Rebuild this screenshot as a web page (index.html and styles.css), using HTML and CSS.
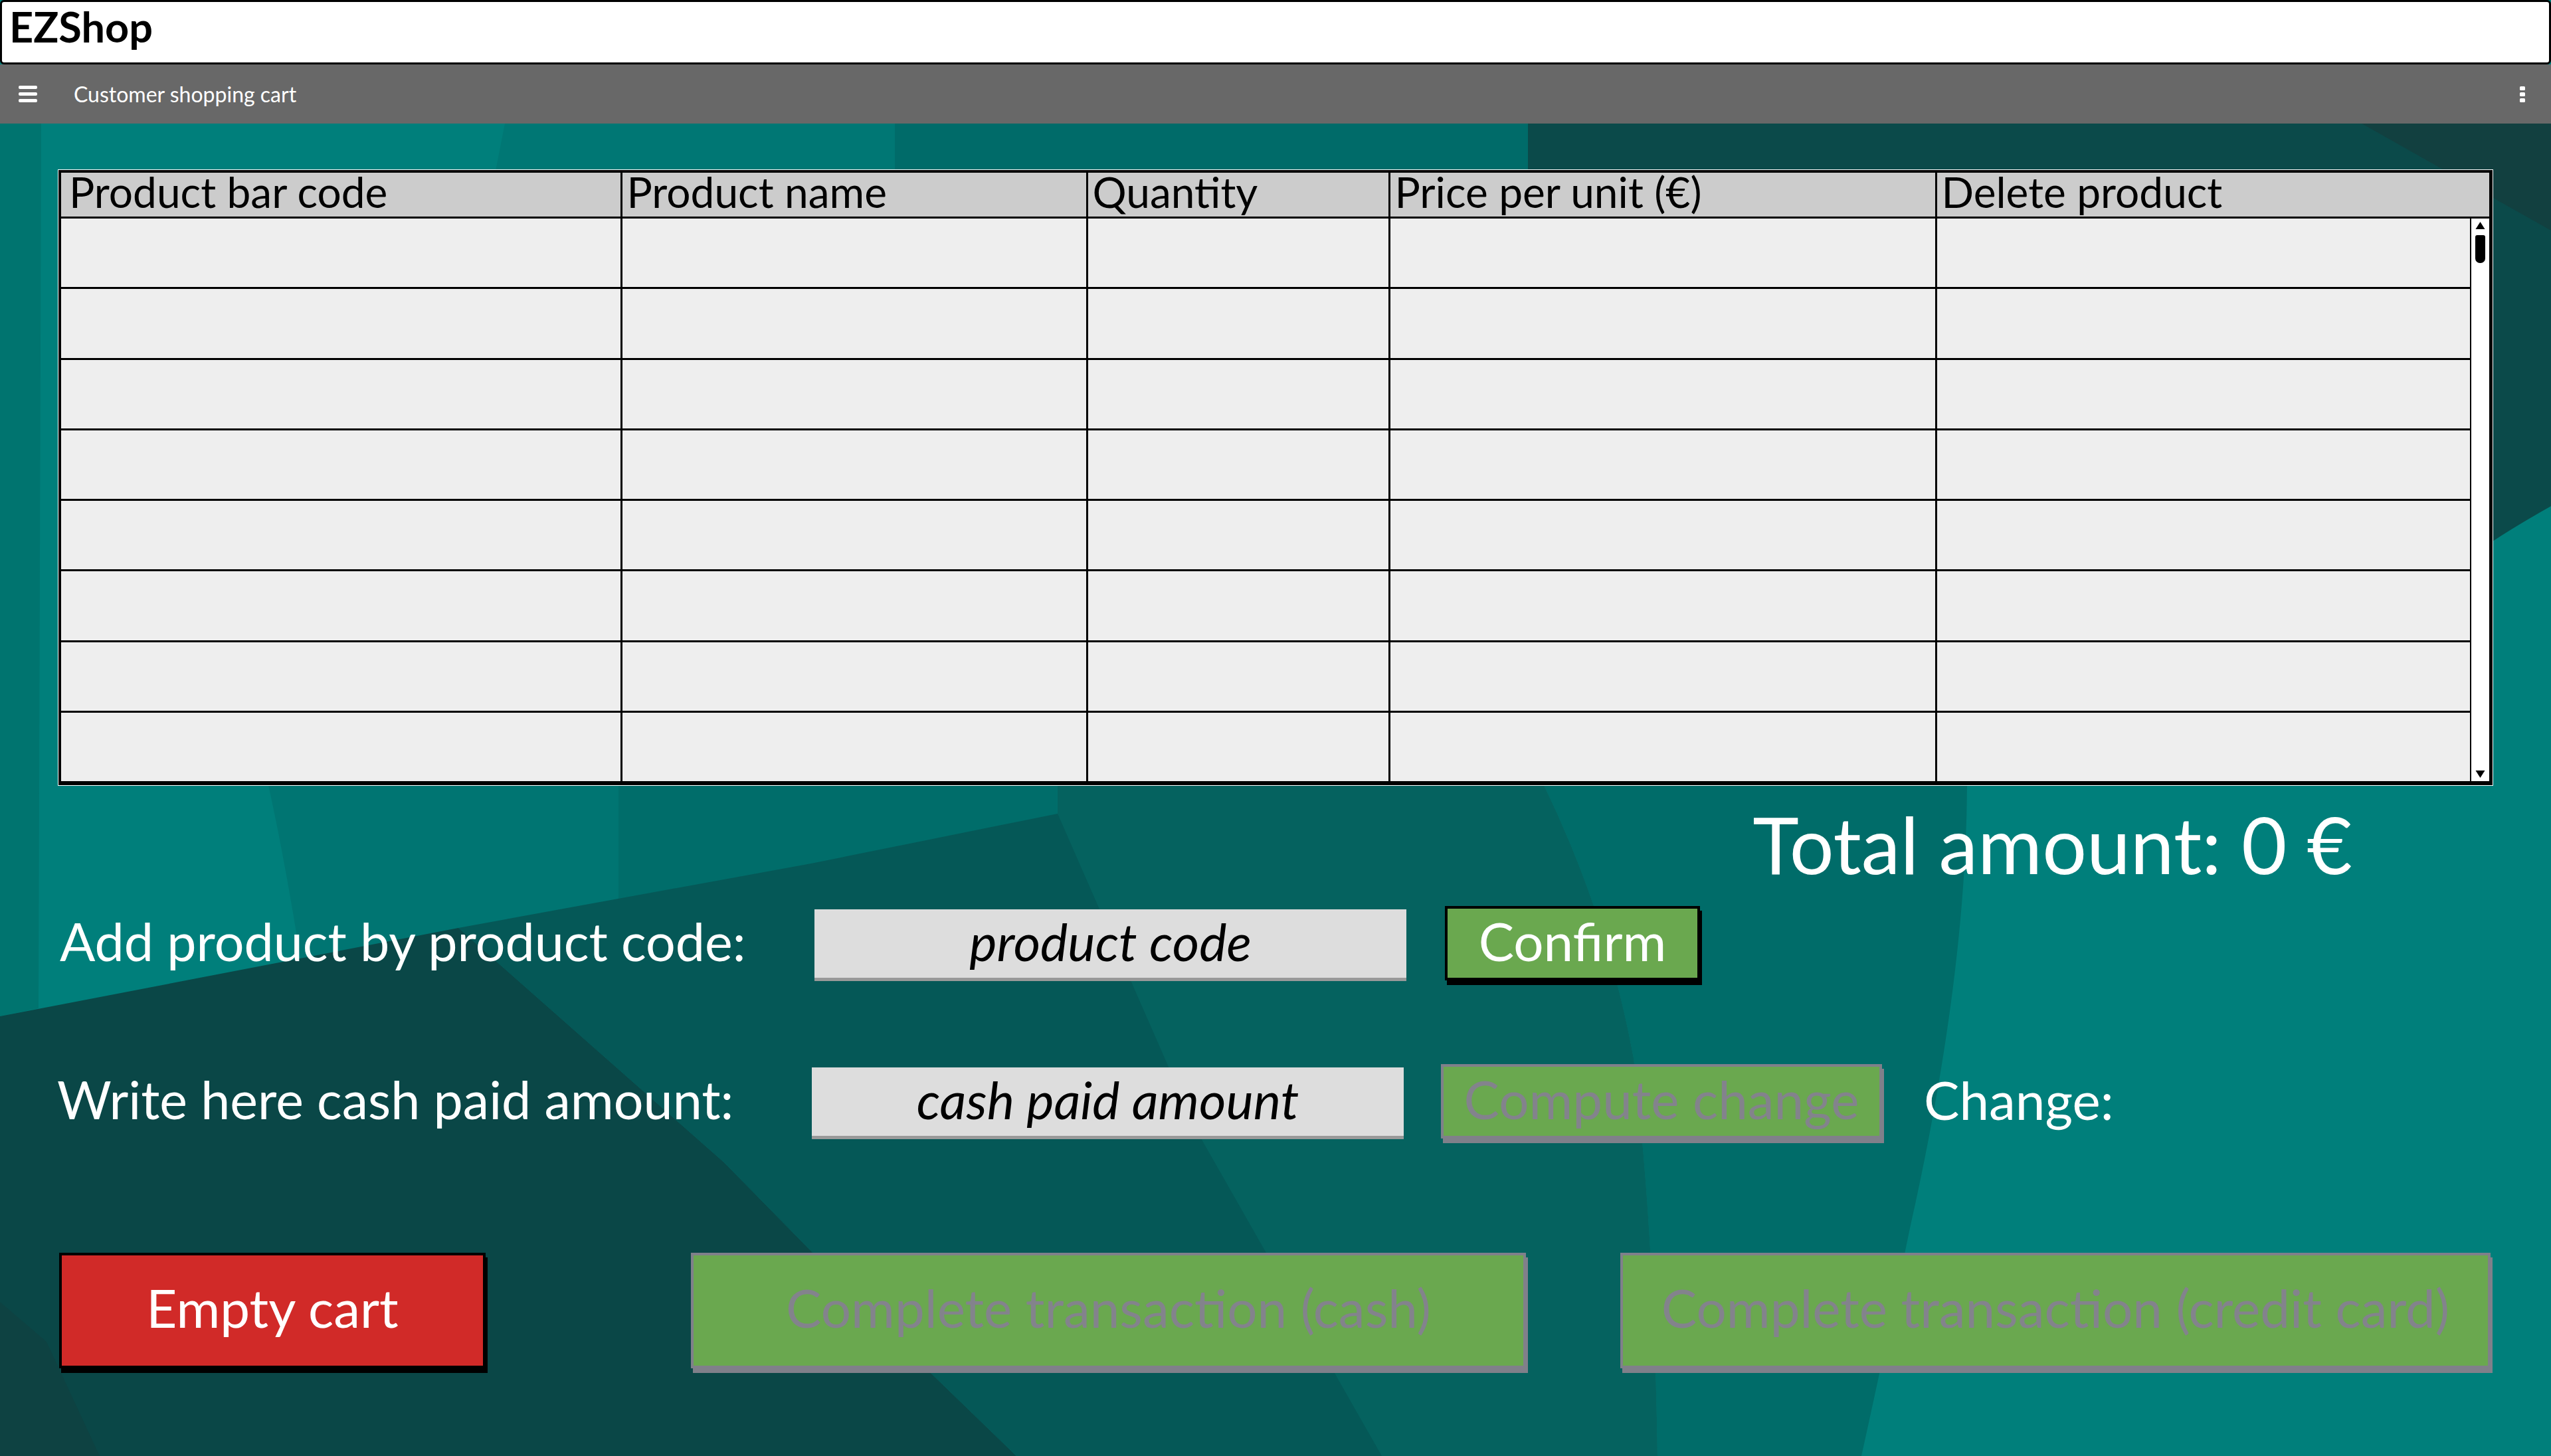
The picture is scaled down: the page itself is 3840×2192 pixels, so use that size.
FILE: index.html
```html
<!DOCTYPE html>
<html lang="en">
<head>
<meta charset="utf-8">
<title>EZShop - Customer shopping cart</title>
<link rel="stylesheet" href="styles.css">
</head>
<body>
<header class="titlebar"><span class="brand">EZShop</span></header>
<nav class="toolbar">
  <span class="hamburger"><i></i><i></i><i></i></span>
  <span class="toolbar-title">Customer shopping cart</span>
  <span class="kebab"><i></i><i></i><i></i></span>
</nav>
<main class="main">
  <svg class="bg" viewBox="0 0 3840 2006" preserveAspectRatio="none" aria-hidden="true">
    <g transform="translate(0,-186)">
      <rect x="0" y="186" width="3840" height="2006" fill="#007f7b"/>
      <polygon points="0,186 62,186 58,1518 0,1530" fill="#00746f"/>
      <polygon points="760,186 1347,186 1347,262 745,262" fill="#007774"/>
      <polygon points="1347,186 2300,186 2300,262 1347,262" fill="#006b69"/>
      <path d="M2300 186 L3840 186 L3840 762 Q3790 790 3752 815 L3752 262 L2300 262 Z" fill="#0b4a4a"/>
      <polygon points="3555,186 3840,186 3840,347" fill="#124040"/>
      <path d="M404 1182 Q430 1300 455 1460 L931 1370 L931 1182 Z" fill="#007572"/>
      <polygon points="931,1182 1592,1182 1592,1400 931,1400" fill="#006d6a"/>
      <path d="M2324 1182 L2961 1182 Q2960 1470 2875 1849 Q2840 2020 2802 2192 L2495 2192 Q2490 1850 2459 1593 Q2420 1380 2324 1182 Z" fill="#006c69"/>
      <path d="M1592 1182 L2324 1182 Q2420 1380 2459 1593 Q2490 1850 2495 2192 L1592 2192 Z" fill="#05625f"/>
      <polygon points="690,1397 1221,1300 1592,1225 1800,1700 2080,2192 1530,2192 1400,2066 1090,1750" fill="#055857"/>
      <polygon points="0,1530 690,1397 1090,1750 1400,2066 1530,2192 0,2192" fill="#0a4747"/>
      <polygon points="0,1960 70,2020 150,2192 0,2192" fill="#0e4242"/>
    </g>
  </svg>
  <div class="content">
    <div class="table">
      <div class="thead">
        <div class="th">Product bar code</div>
        <div class="th">Product name</div>
        <div class="th">Quantity</div>
        <div class="th">Price per unit (€)</div>
        <div class="th">Delete product</div>
      </div>
      <div class="tbody">
        <div class="rows">
          <div class="row"><div class="td"></div><div class="td"></div><div class="td"></div><div class="td"></div><div class="td"></div></div>
          <div class="row"><div class="td"></div><div class="td"></div><div class="td"></div><div class="td"></div><div class="td"></div></div>
          <div class="row"><div class="td"></div><div class="td"></div><div class="td"></div><div class="td"></div><div class="td"></div></div>
          <div class="row"><div class="td"></div><div class="td"></div><div class="td"></div><div class="td"></div><div class="td"></div></div>
          <div class="row"><div class="td"></div><div class="td"></div><div class="td"></div><div class="td"></div><div class="td"></div></div>
          <div class="row"><div class="td"></div><div class="td"></div><div class="td"></div><div class="td"></div><div class="td"></div></div>
          <div class="row"><div class="td"></div><div class="td"></div><div class="td"></div><div class="td"></div><div class="td"></div></div>
          <div class="row"><div class="td"></div><div class="td"></div><div class="td"></div><div class="td"></div><div class="td"></div></div>
        </div>
        <div class="scrollbar">
          <svg class="arrow" width="17" height="16" viewBox="0 0 17 16"><path d="M8.5 2 L15.5 13 L1.5 13 Z" fill="#000"/></svg>
          <div class="thumb"></div>
          <div class="track"></div>
          <svg class="arrow" width="17" height="16" viewBox="0 0 17 16"><path d="M1.5 3 L15.5 3 L8.5 14 Z" fill="#000"/></svg>
        </div>
      </div>
    </div>

    <div class="total">Total amount: 0 €</div>

    <div class="form-row row-add">
      <div class="label">Add product by product code:</div>
      <div class="input">product code</div>
      <div class="btn btn-confirm">Confirm</div>
    </div>

    <div class="form-row row-cash">
      <div class="label">Write here cash paid amount:</div>
      <div class="input">cash paid amount</div>
      <div class="btn btn-compute disabled">Compute change</div>
      <div class="label change">Change:</div>
    </div>

    <div class="actions">
      <div class="btn-big btn-empty">Empty cart</div>
      <div class="btn-big btn-cash disabled">Complete transaction (cash)</div>
      <div class="btn-big btn-card disabled">Complete transaction (credit card)</div>
    </div>
  </div>
</main>
</body>
</html>
```

FILE: styles.css
```css
* {
  box-sizing: border-box;
}

html, body {
  margin: 0;
  padding: 0;
}

body {
  width: 3840px;
  height: 2192px;
  overflow: hidden;
  background: #007f7b;
  font-family: "Lato", "Liberation Sans", sans-serif;
  color: #000;
}

/* ---------- title bar ---------- */
.titlebar {
  display: block;
  height: 97px;
  border: 3px solid #000;
  border-radius: 6px;
  background: #fff;
  padding-left: 11px;
}

.brand {
  display: block;
  font-weight: 700;
  font-size: 63px;
  line-height: 74px;
}

/* ---------- toolbar ---------- */
.toolbar {
  display: flex;
  align-items: center;
  height: 89px;
  background: #686868;
  padding: 0 39px 0 28px;
}

.hamburger {
  display: flex;
  flex-direction: column;
  gap: 5px;
  width: 28px;
}

.hamburger i {
  display: block;
  height: 5px;
  background: #fff;
  border-radius: 2px;
}

.toolbar-title {
  flex: 1;
  margin-left: 55px;
  color: #fff;
  font-size: 32px;
  line-height: 40px;
}

.kebab {
  display: flex;
  flex-direction: column;
  gap: 3px;
}

.kebab i {
  display: block;
  width: 8px;
  height: 6px;
  background: #fff;
  border-radius: 1.5px;
}

/* ---------- main area ---------- */
.main {
  position: relative;
  height: 2006px;
}

.bg {
  position: absolute;
  left: 0;
  top: 0;
  width: 3840px;
  height: 2006px;
}

.content {
  position: relative;
  padding: 70px 88px 0 88px;
}

/* ---------- table ---------- */
.table {
  width: 3664px;
  border: 4px solid #000;
  border-right-width: 5px;
  border-bottom-width: 6px;
  background: #eeeeee;
  box-shadow: 0 0 0 1px #fff;
}

.thead {
  display: grid;
  grid-template-columns: 844.5px 701px 455px 823px 1fr;
  height: 69px;
  background: #cccccc;
  border-bottom: 3px solid #000;
}

.th {
  font-size: 64px;
  line-height: 58px;
  height: 66px;
  padding-left: 7px;
  border-right: 3px solid #000;
  white-space: nowrap;
}

.th:first-child {
  padding-left: 12px;
}

.th:last-child {
  border-right: none;
}

.tbody {
  display: flex;
  height: 847px;
}

.rows {
  flex: 1;
  display: flex;
  flex-direction: column;
}

.row {
  display: grid;
  grid-template-columns: 844.5px 701px 455px 823px 1fr;
  height: 106.25px;
  border-bottom: 3px solid #000;
}

.row:last-child {
  height: 103.25px;
  border-bottom: none;
}

.td {
  border-right: 3px solid #000;
}

.td:last-child {
  border-right: none;
}

.scrollbar {
  width: 29px;
  border-left: 2px solid #000;
  background: #fff;
  display: flex;
  flex-direction: column;
  align-items: center;
  padding: 3px 0 3px;
}

.arrow {
  display: block;
}

.thumb {
  width: 15px;
  height: 42px;
  margin-top: 6px;
  background: #000;
  border-radius: 3px 3px 7px 7px;
}

.track {
  flex: 1;
}

/* ---------- total ---------- */
.total {
  margin-top: 29px;
  padding-right: 211px;
  text-align: right;
  color: #fff;
  font-size: 118px;
  line-height: 120px;
  white-space: nowrap;
}

/* ---------- form rows ---------- */
.form-row {
  display: flex;
  align-items: flex-start;
  height: 113px;
}

.row-add {
  margin-top: 33px;
  padding-left: 2px;
}

.row-cash {
  margin-top: 125px;
  margin-left: -2px;
}

.label {
  width: 1136px;
  margin-top: 5px;
  color: #fff;
  font-size: 79px;
  line-height: 96px;
  white-space: nowrap;
}

.input {
  width: 891px;
  height: 108px;
  margin-top: 5px;
  background: #dddddd;
  border-bottom: 5px solid #999;
  font-style: italic;
  font-size: 78px;
  line-height: 96px;
  text-align: center;
  white-space: nowrap;
}

.btn {
  height: 112px;
  border: 4px solid #000;
  box-shadow: 3px 7px 0 #000;
  background: #6aa84f;
  color: #fff;
  font-size: 80px;
  line-height: 96px;
  text-align: center;
  white-space: nowrap;
}

.btn-confirm {
  width: 384px;
  margin-left: 58px;
}

.btn-compute {
  width: 664px;
  margin-left: 56px;
}

.disabled {
  border-color: #80808a;
  box-shadow: 3px 7px 0 #80808a;
  color: #83838c;
}

.change {
  width: auto;
  margin-left: 63px;
  font-size: 80px;
}

/* ---------- bottom actions ---------- */
.actions {
  display: flex;
  height: 174px;
  margin-top: 171px;
  padding-left: 1px;
}

.btn-big {
  display: flex;
  align-items: center;
  justify-content: center;
  height: 174px;
  padding-bottom: 10px;
  border: 4px solid #000;
  box-shadow: 3px 7px 0 #000;
  background: #6aa84f;
  color: #fff;
  font-size: 80px;
  line-height: 96px;
  white-space: nowrap;
}

.btn-empty {
  width: 642px;
  background: #d12a28;
}

.btn-cash {
  width: 1257px;
  margin-left: 309px;
}

.btn-card {
  width: 1310px;
  margin-left: 142px;
}

.btn-big.disabled {
  border-color: #80808a;
  box-shadow: 3px 7px 0 #80808a;
  color: #83838c;
}
```
